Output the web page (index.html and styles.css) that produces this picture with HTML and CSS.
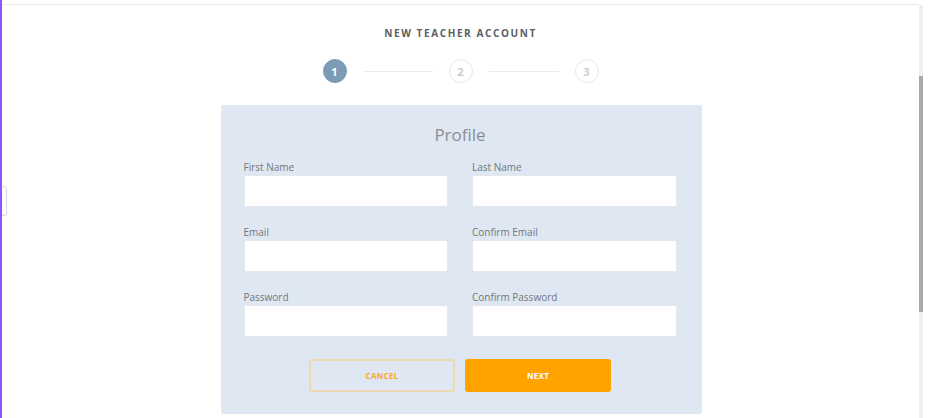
FILE: index.html
```html
<!DOCTYPE html>
<html lang="en">
<head>
	<title>New Teacher Account</title>
	<link rel="stylesheet" href="styles.css">
</head>
<body>
	<div class="screen">
		<div class="side-tab"></div>
		<main class="page">
			<h1 class="title">New Teacher Account</h1>
			<ol class="steps">
				<li class="step active">1</li>
				<li class="step-line"></li>
				<li class="step">2</li>
				<li class="step-line"></li>
				<li class="step">3</li>
			</ol>
			<form class="card">
				<h2>Profile</h2>
				<div class="fields">
					<div class="field">
						<label for="first-name">First Name</label>
						<input type="text" id="first-name">
					</div>
					<div class="field">
						<label for="last-name">Last Name</label>
						<input type="text" id="last-name">
					</div>
					<div class="field">
						<label for="email">Email</label>
						<input type="email" id="email">
					</div>
					<div class="field">
						<label for="confirm-email">Confirm Email</label>
						<input type="email" id="confirm-email">
					</div>
					<div class="field">
						<label for="password">Password</label>
						<input type="password" id="password">
					</div>
					<div class="field">
						<label for="confirm-password">Confirm Password</label>
						<input type="password" id="confirm-password">
					</div>
				</div>
				<div class="actions">
					<button type="button" class="btn btn-cancel">Cancel</button>
					<button type="button" class="btn btn-next">Next</button>
				</div>
			</form>
		</main>
		<div class="scroll-track">
			<div class="scroll-thumb"></div>
		</div>
	</div>
</body>
</html>
```

FILE: styles.css
```css
html, body {
	margin: 0;
	height: 100%;
	background: #fff;
}
body {
	font-family: "Open Sans", Arial, sans-serif;
	overflow: hidden;
}
.screen {
	position: relative;
	display: flex;
	height: 418px;
	border-left: 2px solid #8e55fb;
	box-sizing: border-box;
}
.side-tab {
	position: absolute;
	left: 0;
	top: 186px;
	width: 4px;
	height: 28px;
	background: #fff;
	border: 1px solid #d5d8de;
	border-left: none;
	border-radius: 0 4px 4px 0;
}
.page {
	flex: 1;
	margin-top: 4px;
	border-top: 1px solid #e9e9ee;
	display: flex;
	flex-direction: column;
	align-items: center;
}
.title {
	margin: 21px 0 0;
	font-size: 10px;
	line-height: 14px;
	font-weight: 700;
	letter-spacing: 1.6px;
	text-transform: uppercase;
	color: #5a5e63;
}
.steps {
	list-style: none;
	margin: 19px 0 0;
	padding: 0;
	display: flex;
	align-items: center;
	gap: 16px;
}
.step {
	width: 24px;
	height: 24px;
	box-sizing: border-box;
	border-radius: 50%;
	border: 1px solid #e3e7eb;
	background: #fff;
	color: #c7cdd4;
	font-size: 11px;
	font-weight: 700;
	display: flex;
	align-items: center;
	justify-content: center;
}
.step.active {
	background: #7c9bb4;
	border-color: #7c9bb4;
	color: #fff;
}
.step-line {
	width: 70px;
	height: 1px;
	background: #eaecef;
}
.card {
	margin: 22px 0 0 1px;
	width: 481px;
	box-sizing: border-box;
	padding: 18px 25px 22px 23px;
	background: #dfe8f2;
	border-radius: 2px;
}
.card h2 {
	margin: 0;
	text-align: center;
	font-size: 17px;
	line-height: 24px;
	font-weight: 400;
	color: #8b8e92;
}
.fields {
	margin-top: 14px;
	display: grid;
	grid-template-columns: 1fr 1fr;
	column-gap: 24px;
	row-gap: 19px;
}
.field label {
	display: block;
	margin-bottom: 2px;
	font-size: 10px;
	line-height: 12px;
	color: #72767b;
}
.field input {
	display: block;
	width: 100%;
	height: 32px;
	box-sizing: border-box;
	margin: 0;
	border: 1px solid #e4e8ec;
	border-radius: 2px;
	background: #fff;
}
.actions {
	margin-top: 22px;
	display: flex;
	justify-content: center;
	gap: 10px;
}
.btn {
	width: 146px;
	height: 33px;
	box-sizing: border-box;
	border-radius: 3px;
	font-family: "Open Sans", Arial, sans-serif;
	font-size: 8px;
	font-weight: 700;
	text-transform: uppercase;
	letter-spacing: 0.3px;
}
.btn-cancel {
	background: transparent;
	border: 2px solid #ecd9b0;
	color: #f6a82a;
}
.btn-next {
	background: #ffa300;
	border: none;
	color: #fff;
}
.scroll-track {
	width: 4px;
	margin: 5px 5px 0 0;
	background: #f0f0f4;
}
.scroll-thumb {
	margin-top: 71px;
	height: 236px;
	background: #a9a9ae;
}
```
